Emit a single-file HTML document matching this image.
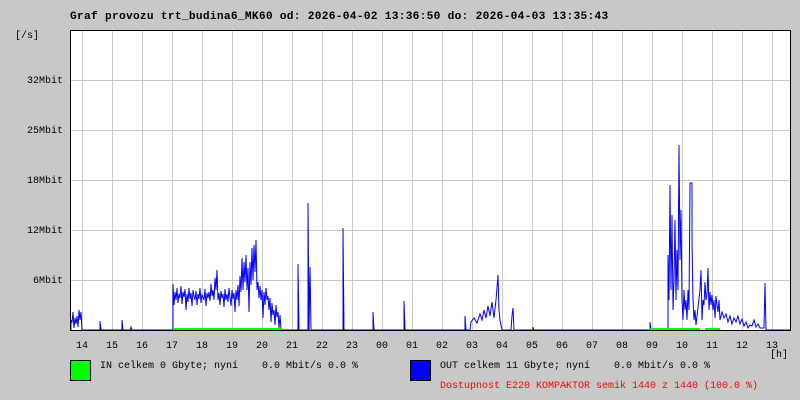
<!DOCTYPE html>
<html><head><style>
body{margin:0;background:#c8c8c8;width:800px;height:400px;overflow:hidden;position:relative;font-family:"Liberation Mono","DejaVu Sans Mono",monospace;}
.t{position:absolute;font-size:10px;line-height:12px;white-space:pre;color:#000}
.h{position:absolute;top:341px;width:30px;margin-left:-15px;text-align:center;font-size:10px;line-height:12px}
</style></head><body>
<div class="t" style="left:70px;top:11px;font-weight:bold;font-size:11.2px;letter-spacing:0.28px">Graf provozu trt_budina6_MK60 od: 2026-04-02 13:36:50 do: 2026-04-03 13:35:43</div>
<div class="t" style="left:15px;top:31px">[/s]</div>
<div class="t" style="left:0;width:63px;text-align:right;top:76px">32Mbit</div>
<div class="t" style="left:0;width:63px;text-align:right;top:126px">25Mbit</div>
<div class="t" style="left:0;width:63px;text-align:right;top:176px">18Mbit</div>
<div class="t" style="left:0;width:63px;text-align:right;top:226px">12Mbit</div>
<div class="t" style="left:0;width:63px;text-align:right;top:276px">6Mbit</div>
<svg width="800" height="400" style="position:absolute;left:0;top:0">
<rect x="70.5" y="30.5" width="720" height="300" fill="#fff"/>
<g stroke="#c8c8c8" stroke-width="1">
<path d="M82.5 31V330M112.5 31V330M142.5 31V330M172.5 31V330M202.5 31V330M232.5 31V330M262.5 31V330M292.5 31V330M322.5 31V330M352.5 31V330M382.5 31V330M412.5 31V330M442.5 31V330M472.5 31V330M502.5 31V330M532.5 31V330M562.5 31V330M592.5 31V330M622.5 31V330M652.5 31V330M682.5 31V330M712.5 31V330M742.5 31V330M772.5 31V330"/>
<path d="M63 80.5H790M63 130.5H790M63 180.5H790M63 230.5H790M63 280.5H790"/>
</g>
<g fill="none" stroke="#00f" stroke-width="1">
<polyline points="71,330 71,320 72,322 73,312 74,328 75,318 76,324 77,316 78,327 79,310 80,320 81,312 82,330 100,330 100,321 101,330 122,330 122,320 123,330 130,330 131,327 132,330 173,330 173,284 174,305 175,292 176,300 177,288 178,303 179,294 180,298 181,286 182,304 183,292 184,297 185,289 186,310 187,294 188,302 189,288 190,299 191,293 192,306 193,290 194,296 195,300 196,291 197,305 198,294 199,299 200,288 201,303 202,295 203,297 204,300 205,289 206,306 207,293 208,298 209,292 210,301 211,284 212,296 213,290 214,300 215,278 216,290 217,270 218,300 219,293 220,305 221,291 222,298 223,294 224,307 225,289 226,300 227,294 228,302 229,288 230,297 231,306 232,290 233,299 234,293 235,312 236,290 237,300 238,285 239,306 240,276 241,292 242,258 243,290 244,262 245,282 246,255 247,290 248,268 249,312 250,262 251,285 252,248 253,280 254,245 255,272 256,240 257,290 258,282 259,298 260,286 261,300 262,290 263,318 264,292 265,305 266,288 267,300 268,296 269,310 270,298 271,322 272,303 273,315 274,310 275,325 276,305 277,317 278,312 279,328 280,315 281,330 298,330 298,264 299,330 308,330 308,203 309,330 310,267 311,330 343,330 343,228 344,330 373,330 373,312 374,330 404,330 404,301 405,330 465,330 465,316 466,330 470,330 471,322 474,318 477,323 480,314 482,320 484,310 486,318 488,306 490,316 492,302 494,318 496,300 498,275 499,310 500,320 502,330 511,330 512,316 513,308 514,330 533,330 533,327 534,330 650,330 650,322 651,330 668,330 668,255 669,300 670,185 671,290 672,215 673,310 674,280 675,220 676,300 677,250 678,290 679,145 680,260 681,210 682,300 683,320 684,290 685,310 686,300 687,320 688,290 689,310 690,183 692,183 692,240 693,300 694,320 695,310 696,325 700,290 701,270 702,320 703,300 704,305 705,282 706,300 707,295 708,268 709,310 710,292 711,305 712,295 713,310 714,300 715,318 716,296 717,305 718,312 719,300 720,320 722,312 724,318 726,314 728,322 730,316 732,324 734,318 736,322 738,316 740,324 742,319 744,326 746,322 748,328 750,325 752,326 754,320 756,327 758,324 760,328 764,328 765,283 766,330 790,330"/>
</g>
<g stroke="#0f0" stroke-width="2">
<path d="M173 329H282M650 329H700M705 329H720"/>
</g>
<rect x="70.5" y="30.5" width="720" height="300" fill="none" stroke="#000"/>
<rect x="70.5" y="360.5" width="20" height="20" fill="#0f0" stroke="#000"/>
<rect x="410.5" y="360.5" width="20" height="20" fill="#00f" stroke="#000"/>
</svg>
<div class="h" style="left:82px">14</div><div class="h" style="left:112px">15</div><div class="h" style="left:142px">16</div><div class="h" style="left:172px">17</div><div class="h" style="left:202px">18</div><div class="h" style="left:232px">19</div><div class="h" style="left:262px">20</div><div class="h" style="left:292px">21</div><div class="h" style="left:322px">22</div><div class="h" style="left:352px">23</div><div class="h" style="left:382px">00</div><div class="h" style="left:412px">01</div><div class="h" style="left:442px">02</div><div class="h" style="left:472px">03</div><div class="h" style="left:502px">04</div><div class="h" style="left:532px">05</div><div class="h" style="left:562px">06</div><div class="h" style="left:592px">07</div><div class="h" style="left:622px">08</div><div class="h" style="left:652px">09</div><div class="h" style="left:682px">10</div><div class="h" style="left:712px">11</div><div class="h" style="left:742px">12</div><div class="h" style="left:772px">13</div>
<div class="t" style="left:770px;top:350px">[h]</div>
<div class="t" style="left:100px;top:361px">IN celkem 0 Gbyte; nyní    0.0 Mbit/s 0.0 %</div>
<div class="t" style="left:440px;top:361px">OUT celkem 11 Gbyte; nyní    0.0 Mbit/s 0.0 %</div>
<div class="t" style="left:440px;top:381px;color:#f00">Dostupnost E220 KOMPAKTOR semik 1440 z 1440 (100.0 %)</div>
</body></html>
